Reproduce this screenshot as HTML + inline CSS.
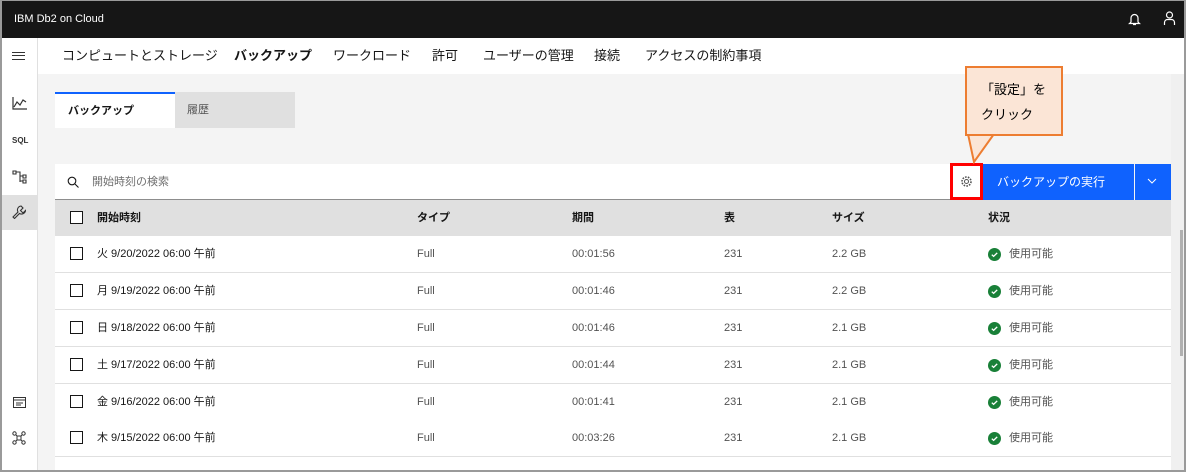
<!DOCTYPE html>
<html><head><meta charset="utf-8"><style>
*{box-sizing:border-box;margin:0;padding:0}
html,body{width:1186px;height:472px;overflow:hidden}
body{background:#f4f4f4;font-family:"Liberation Sans","Noto Sans CJK JP",sans-serif;position:relative;color:#161616;line-height:1.2}
.frame{position:absolute;left:0;top:0;width:1186px;height:472px;border:2px solid #9a9a9a;border-top:1px solid #9a9a9a;pointer-events:none;z-index:50}
.top{position:absolute;left:0;top:0;width:1186px;height:38px;background:#161616;color:#fff;font-size:11px;padding:13px 0 0 14px;line-height:12px}
.side{position:absolute;left:0;top:38px;width:38px;height:434px;background:#fff;border-right:1px solid #e0e0e0}
.nav{position:absolute;left:38px;top:38px;width:1148px;height:36px;background:#fff;font-size:13px}
.nav span{position:absolute;top:11px;line-height:14px}
.abs{position:absolute}
.tab1{left:55px;top:92px;width:120px;height:36px;background:#fff;border-top:2px solid #0f62fe;font-size:11px;font-weight:bold;padding:11px 0 0 13px;line-height:12px}
.tab2{left:175px;top:92px;width:120px;height:36px;background:#e0e0e0;font-size:11px;color:#525252;padding:12px 0 0 12px;line-height:12px}
.search{left:55px;top:164px;width:895px;height:36px;background:#fff;border-bottom:1px solid #8d8d8d;font-size:11px;color:#6f6f6f}
.gear{left:950px;top:163px;width:33px;height:37px;background:#fff;border:3px solid #f00}
.btn{left:983px;top:164px;width:151px;height:36px;background:#0f62fe;color:#fff;font-size:12px;padding:12px 0 0 14px;line-height:13px}
.btn2{left:1135px;top:164px;width:36px;height:36px;background:#0f62fe}
.thead{left:55px;top:200px;width:1116px;height:36px;background:#e0e0e0;font-size:11px;font-weight:bold}
.row{left:55px;width:1116px;height:37px;background:#fff;border-bottom:1px solid #e0e0e0;font-size:11px;color:#525252}
.row span,.thead span{position:absolute;top:12px;line-height:12px}
.cb{position:absolute;left:15px;top:11px;width:13px;height:13px;border:1px solid #161616;background:#fff}
.ok{position:absolute;left:933px;top:12px;width:13px;height:13px}
.scroll{left:1171px;top:74px;width:13px;height:398px;background:#f0f0f0}
.callout{left:965px;top:66px;width:98px;height:70px;background:#fbe5d6;border:2px solid #ed7d31;font-size:13px;color:#000;padding:9px 0 0 14px;line-height:25px}
</style></head><body>
<div class="top">IBM Db2 on Cloud
<svg class="abs" style="left:1128px;top:12px" width="13" height="14" viewBox="0 0 13 14"><path d="M3 10V6a3.5 3.5 0 017 0v4l1.5 1.5h-10z M5 12.5h3" fill="none" stroke="#fff" stroke-width="1.2"/></svg>
<svg class="abs" style="left:1163px;top:11px" width="13" height="15" viewBox="0 0 13 15"><circle cx="6.5" cy="4" r="3" fill="none" stroke="#fff" stroke-width="1.2"/><path d="M1.5 14v-2.5a3 3 0 013-3h4a3 3 0 013 3V14" fill="none" stroke="#fff" stroke-width="1.2"/></svg>
</div>
<div class="side">
<div class="abs" style="left:12px;top:14px;width:13px;height:8px;border-top:1.5px solid #333;border-bottom:1.5px solid #333"><div style="margin-top:2px;border-top:1.5px solid #333"></div></div>
<svg class="abs" style="left:12px;top:59px" width="15" height="13" viewBox="0 0 15 13"><path d="M1 0v12h14M2 10l3-5 3 3 3-5 3 2" fill="none" stroke="#333" stroke-width="1.2"/></svg>
<div class="abs" style="left:12px;top:98px;font-size:8px;font-weight:bold;color:#333">SQL</div>
<svg class="abs" style="left:12px;top:132px" width="15" height="14" viewBox="0 0 15 14"><path d="M1 1h3v3H1zM4 2h4v10M8 6h3M8 11h3M11 5h3v3h-3zM11 10h3v3h-3z" fill="none" stroke="#333" stroke-width="1.1"/></svg>
<div class="abs" style="left:0;top:157px;width:37px;height:35px;background:#e0e0e0"></div>
<svg class="abs" style="left:12px;top:167px" width="14" height="14" viewBox="0 0 14 14"><path d="M9 1a4 4 0 00-3 6L1 12l1.5 1.5L7.5 8.5a4 4 0 006-3L11 8 8.5 5.5 11 3z" fill="none" stroke="#333" stroke-width="1.1"/></svg>
<svg class="abs" style="left:13px;top:359px" width="13" height="11" viewBox="0 0 13 11"><rect x=".5" y=".5" width="12" height="10" fill="none" stroke="#333"/><path d="M.5 3h12M3 6h7M3 8h5" stroke="#333"/></svg>
<svg class="abs" style="left:12px;top:393px" width="14" height="14" viewBox="0 0 14 14"><circle cx="2.5" cy="2.5" r="1.7" fill="none" stroke="#333"/><circle cx="11.5" cy="2.5" r="1.7" fill="none" stroke="#333"/><circle cx="2.5" cy="11.5" r="1.7" fill="none" stroke="#333"/><circle cx="11.5" cy="11.5" r="1.7" fill="none" stroke="#333"/><rect x="5" y="5" width="4" height="4" fill="none" stroke="#333"/><path d="M4 4l1 1M10 4L9 5M4 10l1-1M10 10L9 9" stroke="#333"/></svg>
</div>
<div class="nav">
<span style="left:24px">コンピュートとストレージ</span>
<span style="left:196px;font-weight:bold">バックアップ</span>
<span style="left:295px">ワークロード</span>
<span style="left:394px">許可</span>
<span style="left:445px">ユーザーの管理</span>
<span style="left:556px">接続</span>
<span style="left:607px">アクセスの制約事項</span>
</div>
<div class="abs tab1">バックアップ</div>
<div class="abs tab2">履歴</div>
<div class="abs search"><svg class="abs" style="left:12px;top:12px" width="12" height="12" viewBox="0 0 12 12"><circle cx="5" cy="5" r="3.8" fill="none" stroke="#161616" stroke-width="1.1"/><path d="M8 8l3.5 3.5" stroke="#161616" stroke-width="1.1"/></svg><span class="abs" style="left:37px;top:12px;line-height:12px">開始時刻の検索</span></div>
<div class="abs gear"><svg class="abs" style="left:7px;top:9px" width="13" height="13" viewBox="0 0 13 13"><circle cx="6.5" cy="6.5" r="2" fill="none" stroke="#525252"/><circle cx="6.5" cy="6.5" r="4.5" fill="none" stroke="#525252" stroke-width="1.6" stroke-dasharray="1.6 1.2"/></svg></div>
<div class="abs btn">バックアップの実行</div>
<div class="abs btn2"><svg class="abs" style="left:12px;top:14px" width="10" height="7" viewBox="0 0 10 7"><path d="M1 1l4 4 4-4" fill="none" stroke="#fff"/></svg></div>
<div class="abs thead"><div class="cb"></div><span style="left:42px">開始時刻</span><span style="left:362px">タイプ</span><span style="left:517px">期間</span><span style="left:669px">表</span><span style="left:777px">サイズ</span><span style="left:933px">状況</span></div>
<div class="abs row" style="top:236px"><div class="cb"></div><span style="left:42px;color:#161616">火 9/20/2022 06:00 午前</span><span style="left:362px">Full</span><span style="left:517px">00:01:56</span><span style="left:669px">231</span><span style="left:777px">2.2 GB</span><svg class="ok" viewBox="0 0 13 13"><circle cx="6.5" cy="6.5" r="6.5" fill="#198038"/><path d="M3.8 6.7l1.8 1.7 3.6-3.5" fill="none" stroke="#fff" stroke-width="1.3"/></svg><span style="left:954px">使用可能</span></div>
<div class="abs row" style="top:273px"><div class="cb"></div><span style="left:42px;color:#161616">月 9/19/2022 06:00 午前</span><span style="left:362px">Full</span><span style="left:517px">00:01:46</span><span style="left:669px">231</span><span style="left:777px">2.2 GB</span><svg class="ok" viewBox="0 0 13 13"><circle cx="6.5" cy="6.5" r="6.5" fill="#198038"/><path d="M3.8 6.7l1.8 1.7 3.6-3.5" fill="none" stroke="#fff" stroke-width="1.3"/></svg><span style="left:954px">使用可能</span></div>
<div class="abs row" style="top:310px"><div class="cb"></div><span style="left:42px;color:#161616">日 9/18/2022 06:00 午前</span><span style="left:362px">Full</span><span style="left:517px">00:01:46</span><span style="left:669px">231</span><span style="left:777px">2.1 GB</span><svg class="ok" viewBox="0 0 13 13"><circle cx="6.5" cy="6.5" r="6.5" fill="#198038"/><path d="M3.8 6.7l1.8 1.7 3.6-3.5" fill="none" stroke="#fff" stroke-width="1.3"/></svg><span style="left:954px">使用可能</span></div>
<div class="abs row" style="top:347px"><div class="cb"></div><span style="left:42px;color:#161616">土 9/17/2022 06:00 午前</span><span style="left:362px">Full</span><span style="left:517px">00:01:44</span><span style="left:669px">231</span><span style="left:777px">2.1 GB</span><svg class="ok" viewBox="0 0 13 13"><circle cx="6.5" cy="6.5" r="6.5" fill="#198038"/><path d="M3.8 6.7l1.8 1.7 3.6-3.5" fill="none" stroke="#fff" stroke-width="1.3"/></svg><span style="left:954px">使用可能</span></div>
<div class="abs row" style="top:384px"><div class="cb"></div><span style="left:42px;color:#161616">金 9/16/2022 06:00 午前</span><span style="left:362px">Full</span><span style="left:517px">00:01:41</span><span style="left:669px">231</span><span style="left:777px">2.1 GB</span><svg class="ok" viewBox="0 0 13 13"><circle cx="6.5" cy="6.5" r="6.5" fill="#198038"/><path d="M3.8 6.7l1.8 1.7 3.6-3.5" fill="none" stroke="#fff" stroke-width="1.3"/></svg><span style="left:954px">使用可能</span></div>
<div class="abs row" style="top:420px"><div class="cb"></div><span style="left:42px;color:#161616">木 9/15/2022 06:00 午前</span><span style="left:362px">Full</span><span style="left:517px">00:03:26</span><span style="left:669px">231</span><span style="left:777px">2.1 GB</span><svg class="ok" viewBox="0 0 13 13"><circle cx="6.5" cy="6.5" r="6.5" fill="#198038"/><path d="M3.8 6.7l1.8 1.7 3.6-3.5" fill="none" stroke="#fff" stroke-width="1.3"/></svg><span style="left:954px">使用可能</span></div>
<div class="abs row" style="top:457px;height:15px"></div>
<div class="abs scroll"><div class="abs" style="left:9px;top:156px;width:3px;height:126px;background:#b0b0b0"></div></div>
<svg class="abs" style="left:960px;top:133px" width="60" height="32" viewBox="0 0 60 32"><path d="M8 1L14 29 34 1z" fill="#fbe5d6" stroke="#ed7d31" stroke-width="2"/><path d="M9 1h24" stroke="#fbe5d6" stroke-width="3"/></svg>
<div class="abs callout">「設定」を<br>クリック</div>
<div class="frame"></div>
</body></html>
